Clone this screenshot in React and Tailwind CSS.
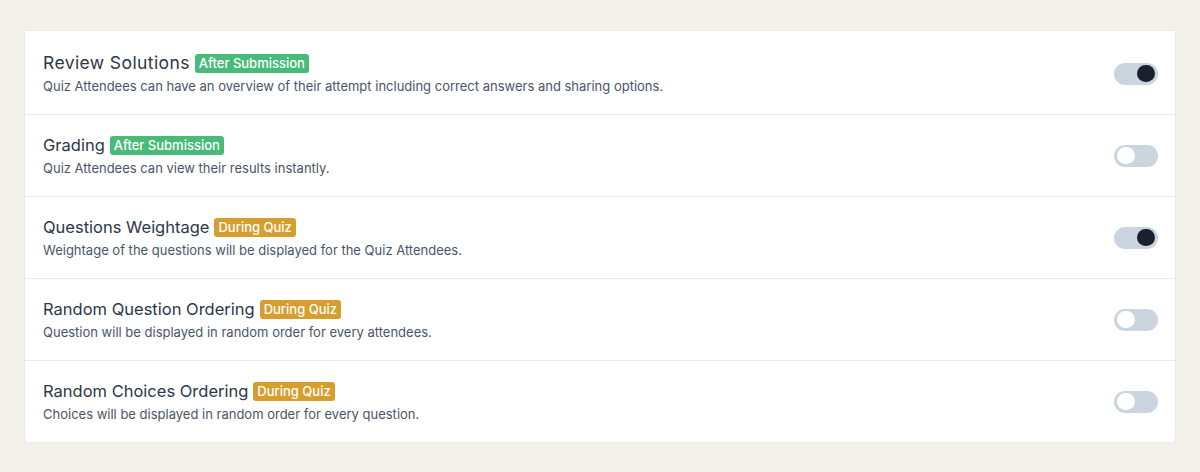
const settings = [
  {
    title: "Review Solutions",
    badge: "After Submission",
    tone: "green",
    text: "Quiz Attendees can have an overview of their attempt including correct answers and sharing options.",
    on: true,
    wide: true,
  },
  {
    title: "Grading",
    badge: "After Submission",
    tone: "green",
    text: "Quiz Attendees can view their results instantly.",
    on: false,
  },
  {
    title: "Questions Weightage",
    badge: "During Quiz",
    tone: "yellow",
    text: "Weightage of the questions will be displayed for the Quiz Attendees.",
    on: true,
  },
  {
    title: "Random Question Ordering",
    badge: "During Quiz",
    tone: "yellow",
    text: "Question will be displayed in random order for every attendees.",
    on: false,
  },
  {
    title: "Random Choices Ordering",
    badge: "During Quiz",
    tone: "yellow",
    text: "Choices will be displayed in random order for every question.",
    on: false,
  },
];

function Toggle({ on }) {
  return (
    <div
      className={
        "w-11 h-[22px] rounded-full bg-[#cbd5e0] flex items-center px-[3px] " +
        (on ? "justify-end" : "justify-start")
      }
    >
      <span
        className={
          "w-[18px] h-[17px] rounded-full " + (on ? "bg-[#1a202c]" : "bg-white")
        }
      />
    </div>
  );
}

function SettingRow({ item }) {
  return (
    <div className="flex items-center justify-between pl-[18px] pr-[17px] py-[18px] border-b border-[#e7e9ee] last:border-b-0">
      <div className="flex flex-col gap-px">
        <div className="flex items-center gap-[5px] leading-6">
          <span
            className={
              "text-[#2d3748] " +
              (item.wide ? "text-[17.5px] tracking-[0.4px]" : "text-[16.5px]")
            }
          >
            {item.title}
          </span>
          <span
            className={
              "text-[13px] leading-[19px] font-medium text-white rounded-[3px] px-[4px] " +
              (item.tone === "green" ? "bg-[#48bb78]" : "bg-[#d69e2e]")
            }
          >
            {item.badge}
          </span>
        </div>
        <p className="text-[13px] leading-5 text-[#4a5568]">{item.text}</p>
      </div>
      <Toggle on={item.on} />
    </div>
  );
}

export default function App() {
  return (
    <div
      className="min-h-[472px] bg-[#f4f1eb] px-6 pt-[30px] pb-7"
      style={{ fontFamily: "Inter, 'Noto Sans', sans-serif" }}
    >
      <div className="bg-white border border-[#e7e9ee] pt-[2px]">
        {settings.map((item) => (
          <SettingRow key={item.title} item={item} />
        ))}
      </div>
    </div>
  );
}
